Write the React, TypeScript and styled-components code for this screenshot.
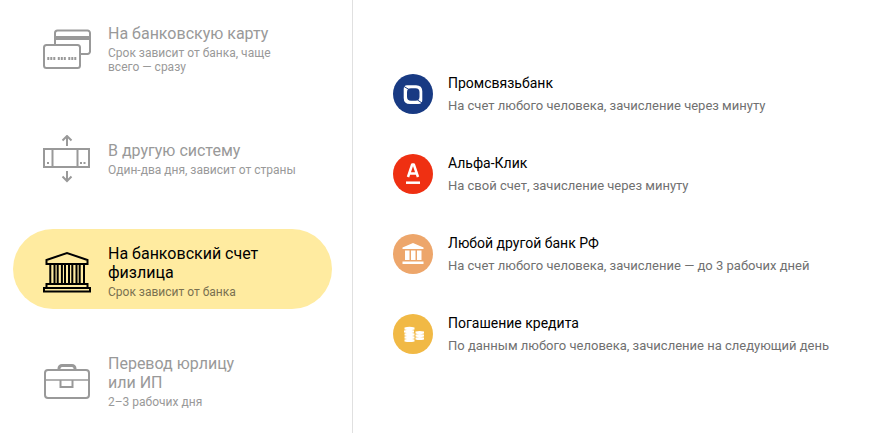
import React, { useState } from "react";
import styled, { createGlobalStyle } from "styled-components";

const GlobalStyle = createGlobalStyle`
  *, *::before, *::after { box-sizing: border-box; }
  body {
    margin: 0;
    background: #fff;
    color: #000;
    font-family: Roboto, "Liberation Sans", sans-serif;
  }
`;

const Page = styled.div`
  display: grid;
  grid-template-columns: minmax(280px, 353px) minmax(0, 1fr);
  min-height: 100vh;
`;

const Sidebar = styled.nav`
  display: flex;
  flex-direction: column;
  gap: 30px;
  padding: 9px 20px 14px 13px;
  border-right: 1px solid #e0e0e0;
`;

const Method = styled.button<{ $active: boolean; $tall: boolean }>`
  display: flex;
  align-items: center;
  gap: 17px;
  width: 100%;
  min-height: 80px;
  padding: ${(p) => (p.$tall ? "5px 30px 0" : "0 30px")};
  border: 0;
  border-radius: 40px;
  background: ${(p) => (p.$active ? "#ffeba0" : "transparent")};
  color: ${(p) => (p.$active ? "#000" : "#999")};
  font-family: inherit;
  text-align: left;
  cursor: pointer;
`;

const MethodIcon = styled.svg`
  flex: none;
  width: 48px;
  height: 48px;
  fill: none;
  stroke: currentColor;
  stroke-width: 2;
`;

const MethodText = styled.span`
  display: flex;
  flex-direction: column;
  gap: 3px;
  min-width: 0;
`;

const MethodTitle = styled.span`
  max-width: 176px;
  font-size: 16px;
  line-height: 19px;
`;

const MethodNote = styled.span<{ $active: boolean }>`
  font-size: 12px;
  line-height: 14px;
  color: ${(p) => (p.$active ? "#7a7150" : "#999")};
`;

const Banks = styled.ul`
  display: flex;
  flex-direction: column;
  gap: 34px;
  margin: 0;
  padding: 71px 20px 40px 40px;
  list-style: none;
`;

const BankLink = styled.a`
  display: flex;
  align-items: center;
  gap: 15px;
  color: #000;
  text-decoration: none;
`;

const BankIcon = styled.svg`
  flex: none;
  width: 40px;
  height: 40px;
`;

const BankText = styled.span`
  display: flex;
  flex-direction: column;
`;

const BankName = styled.span`
  font-size: 14px;
  line-height: 24px;
`;

const BankNote = styled.span`
  font-size: 13px;
  line-height: 22px;
  color: #707070;
`;

const CardsDrawing = () => (
  <>
    <path d="M12 19V8a2.500 2.500 0 0 1 2.500-2.500h30A2.500 2.500 0 0 1 47 8v18.500a2.500 2.500 0 0 1-2.500 2.500H38" />
    <path d="M12 13h35" strokeWidth="4" />
    <rect x="1" y="20" width="36" height="23" rx="2.500" />
    <path d="M4.300 33.500h8M14.800 33.500h8M25.300 33.500h8" strokeWidth="3" strokeDasharray="2 1" />
  </>
);

const TransferDrawing = () => (
  <>
    <rect x="1" y="14" width="45" height="18" />
    <path d="M9.500 14v18M34.500 14v18M24 11V1M19.500 5.500 24 1l4.500 4.500M24 36v10M19.500 41.500 24 46l4.500-4.500" />
    <path d="M4 28h2M37 28h2M40.500 28h2" />
  </>
);

const TempleDrawing = () => (
  <>
    <path d="M3.500 16v-4L24 5l20.500 7v4Z" />
    <path d="M3.500 39.500v-3.500h41v3.500M1 43.500V40h46v3.500Z" />
    <path d="M7.300 16v20M11.500 16v20M14.700 16v20M18.900 16v20M22 16v20M26 16v20M29.300 16v20M33.500 16v20M36.700 16v20M41 16v20" />
  </>
);

const CaseDrawing = () => (
  <>
    <rect x="2" y="12" width="44" height="28" rx="3" />
    <path d="M2 22h44" strokeWidth="1.500" />
    <path d="M17.500 22v7h12v-7" />
    <path d="M16 12v-1.500a3 3 0 0 1 3-3h10a3 3 0 0 1 3 3V12" strokeWidth="3" />
  </>
);

const methods = [
  { title: "На банковскую карту", note: "Срок зависит от банка, чаще всего — сразу", Drawing: CardsDrawing, tall: false },
  { title: "В другую систему", note: "Один-два дня, зависит от страны", Drawing: TransferDrawing, tall: false },
  { title: "На банковский счет физлица", note: "Срок зависит от банка", Drawing: TempleDrawing, tall: true },
  { title: "Перевод юрлицу или\u00a0ИП", note: "2–3 рабочих дня", Drawing: CaseDrawing, tall: true },
];

const PromsvyazLogo = () => (
  <>
    <circle cx="20" cy="20" r="20" fill="#183a83" />
    <path
      fill="#fff"
      fillRule="evenodd"
      d="M14 11.300h9q6.300 0 6.300 6v8.700q0 4-4 4h-8.300q-6.300 0-6.300-6v-8.700q0-4 3.300-4ZM18 14.300q-4 0-4 4v4.500q0 4 4 4h4.500q4 0 4-4v-4.500q0-4-4-4Z"
    />
    <path d="m11 12.500 5 3M24.500 26l4.500 3" stroke="#183a83" />
  </>
);

const AlfaLogo = () => (
  <>
    <circle cx="20" cy="20" r="20" fill="#ef3012" />
    <path d="m15 23 4.200-12.500h1.600L25 23M16.500 19.500h7" fill="none" stroke="#fff" strokeWidth="2.500" strokeLinejoin="round" />
    <path d="M13 28.700h14" stroke="#fff" strokeWidth="2.500" />
  </>
);

const AnyBankLogo = () => (
  <>
    <circle cx="20" cy="20" r="20" fill="#eda66b" />
    <path fill="#fff" d="m20 9 10.500 4.500V15h-21v-1.500ZM12 16.500h4.500V26H12ZM18 16.500h4.500V26H18ZM24 16.500h4.500V26H24ZM9.500 27.500h21V30h-21Z" />
  </>
);

const CreditLogo = () => (
  <>
    <circle cx="20" cy="20" r="20" fill="#f1b945" />
    <g fill="#fff">
      {[14.5, 17.5, 20.5, 23.5, 26.5].map((y, i) => (
        <path key={y} d={`M${i === 1 ? 11 : 11.5} ${y - 1}q5-1.500 10 0v2q-5 1.200-10 0Z`} />
      ))}
      {[18.5, 21.5, 24.5].map((y) => (
        <path key={y} d={`M22.500 ${y - 1}q4-1.200 8.500 0v2q-4.500 1-8.500 0Z`} />
      ))}
    </g>
  </>
);

const banks = [
  { name: "Промсвязьбанк", note: "На счет любого человека, зачисление через минуту", Logo: PromsvyazLogo },
  { name: "Альфа-Клик", note: "На свой счет, зачисление через минуту", Logo: AlfaLogo },
  { name: "Любой другой банк РФ", note: "На счет любого человека, зачисление — до 3 рабочих дней", Logo: AnyBankLogo },
  { name: "Погашение кредита", note: "По данным любого человека, зачисление на следующий день", Logo: CreditLogo },
];

export default function App() {
  const [selected, setSelected] = useState(2);
  return (
    <>
      <GlobalStyle />
      <Page>
        <Sidebar>
          {methods.map(({ title, note, Drawing, tall }, i) => (
            <Method
              key={title}
              type="button"
              $active={i === selected}
              $tall={tall}
              aria-pressed={i === selected}
              onClick={() => setSelected(i)}
            >
              <MethodIcon viewBox="0 0 48 48" aria-hidden="true">
                <Drawing />
              </MethodIcon>
              <MethodText>
                <MethodTitle>{title}</MethodTitle>
                <MethodNote $active={i === selected}>{note}</MethodNote>
              </MethodText>
            </Method>
          ))}
        </Sidebar>
        <main>
          <Banks>
            {banks.map(({ name, note, Logo }) => (
              <li key={name}>
                <BankLink href="#">
                  <BankIcon viewBox="0 0 40 40" aria-hidden="true">
                    <Logo />
                  </BankIcon>
                  <BankText>
                    <BankName>{name}</BankName>
                    <BankNote>{note}</BankNote>
                  </BankText>
                </BankLink>
              </li>
            ))}
          </Banks>
        </main>
      </Page>
    </>
  );
}
